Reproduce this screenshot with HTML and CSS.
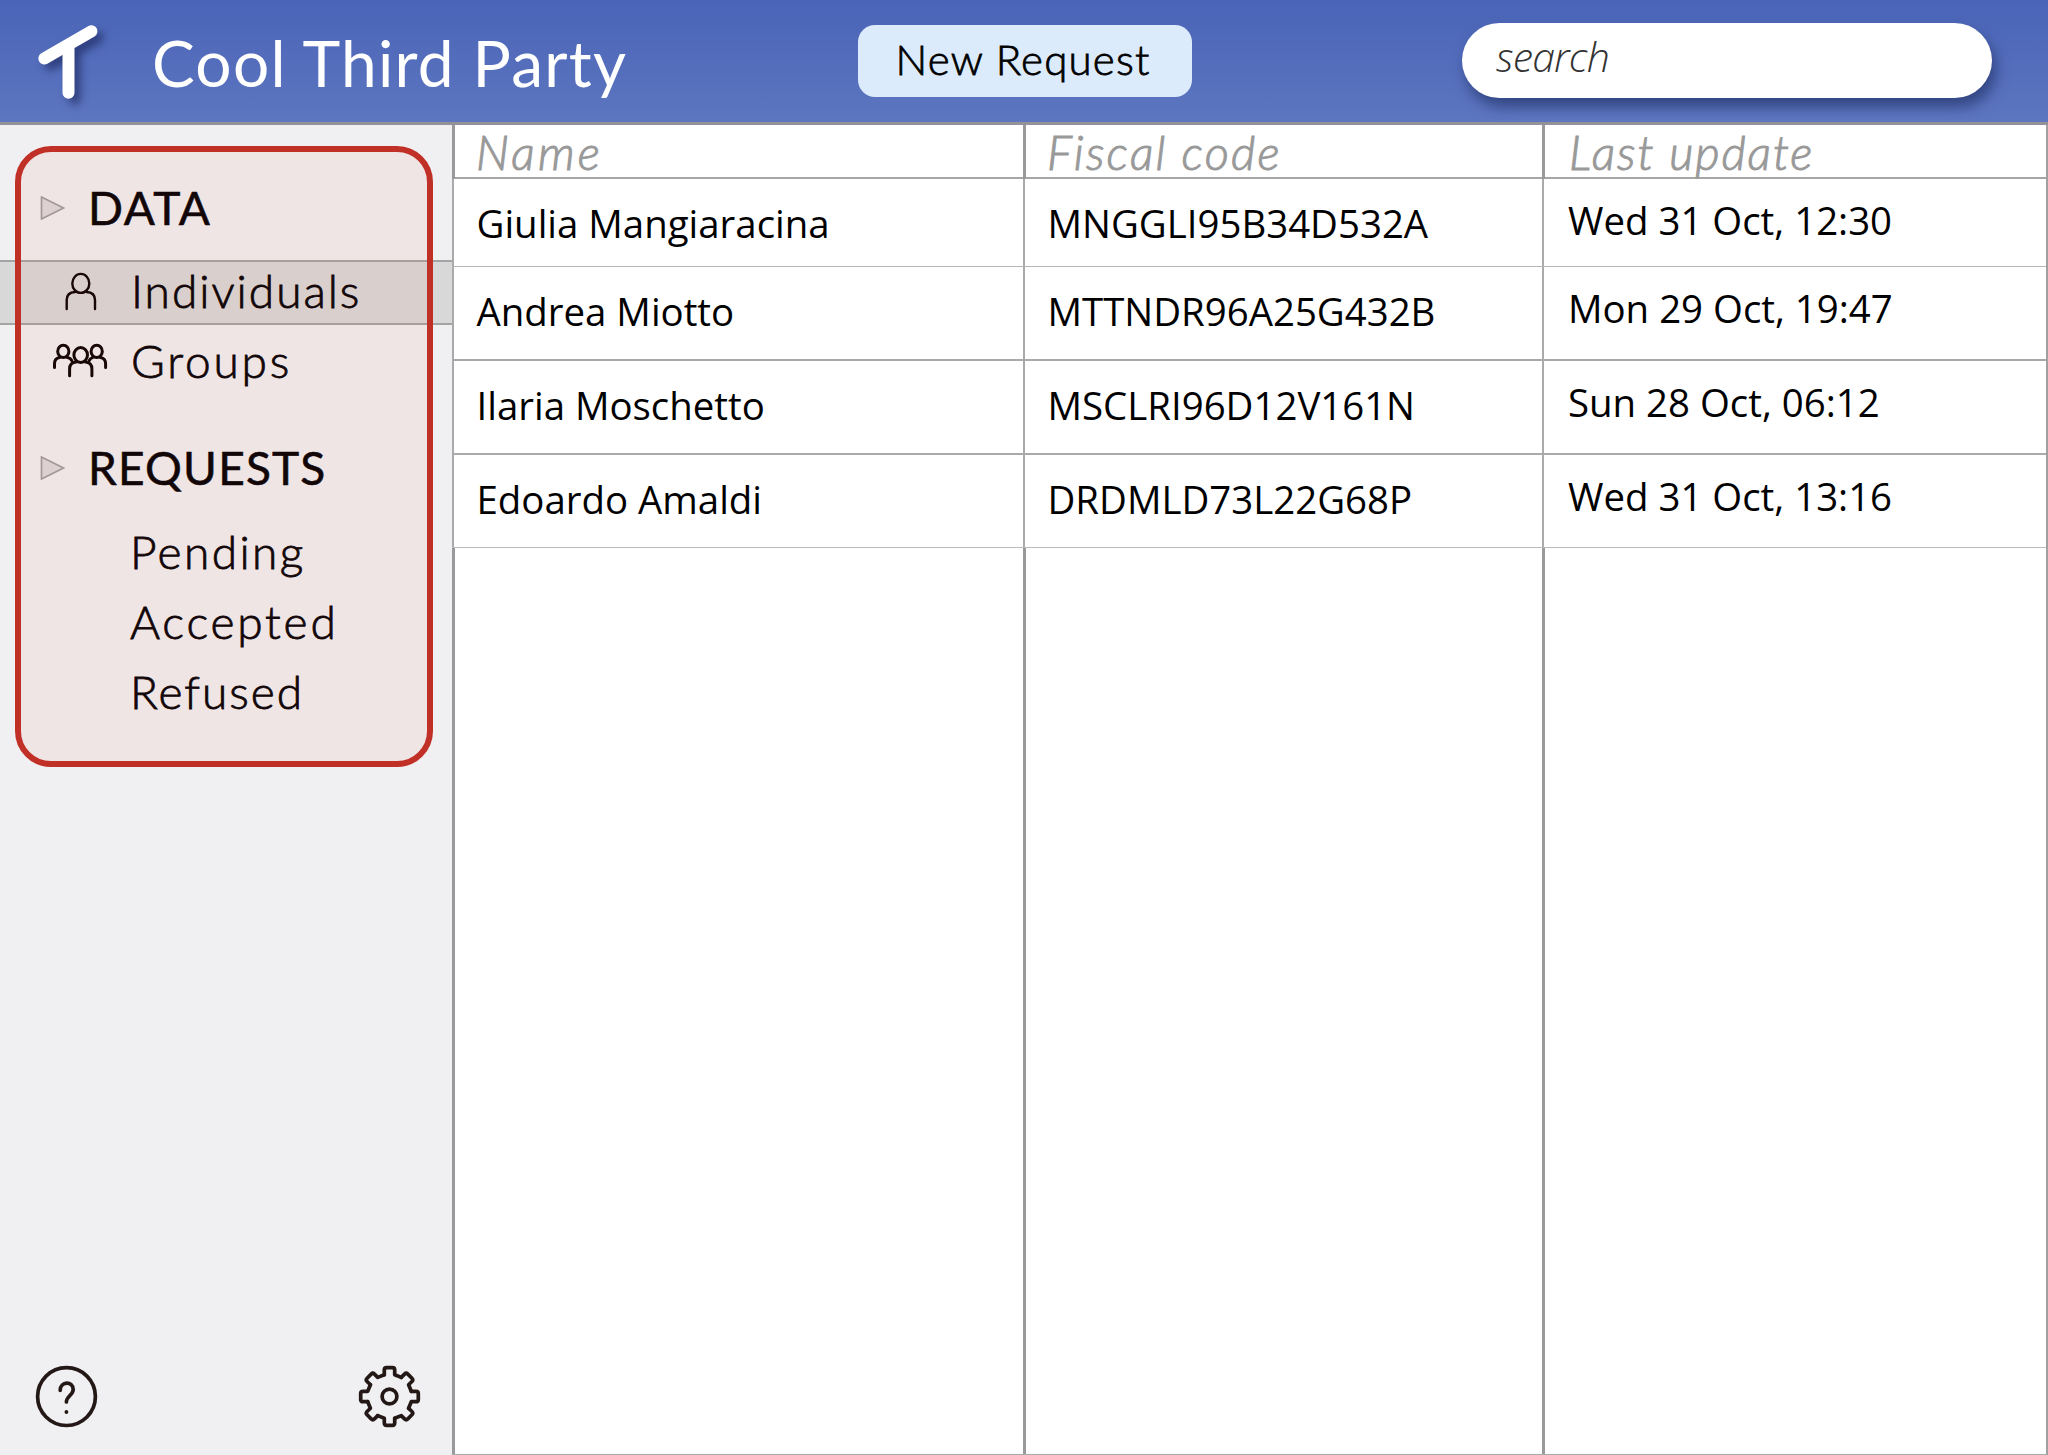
FILE: index.html
```html
<!DOCTYPE html>
<html lang="en">
<head>
<meta charset="utf-8">
<title>Cool Third Party</title>
<link rel="stylesheet" href="styles.css">
</head>
<body>
<header class="topbar">
  <div class="brand">
    <svg class="logo" viewBox="30 15 80 95" fill="none" stroke="#fff" stroke-width="12" stroke-linecap="round"><path d="M44.3 58.5 91.5 31.2M68.5 46V92.8"/></svg>
    <h1 class="title">Cool Third Party</h1>
  </div>
  <button class="new-request">New Request</button>
  <div class="search">search</div>
</header>
<main class="workspace">
  <aside class="sidebar">
    <nav class="menu">
      <div class="heading data"><svg class="arrow" viewBox="0 0 24 24"><path d="M1 1V23L23 12Z"/></svg><span>DATA</span></div>
      <a class="item selected"><svg class="icon" viewBox="50 260 60 60" stroke-width="2.4"><ellipse cx="80.8" cy="282.4" rx="8.5" ry="9.5"/><path d="M66.7 308V299Q66.7 291.5 75 291M95 308V299Q95 291.5 86.7 291"/></svg><span>Individuals</span></a>
      <a class="item groups"><svg class="icon" viewBox="50 329 60 60" stroke-width="3"><ellipse cx="63.3" cy="350.4" rx="5.6" ry="6.2"/><ellipse cx="96.7" cy="350.4" rx="5.6" ry="6.2"/><ellipse cx="80.7" cy="354" rx="6.8" ry="7.4"/><path d="M54.5 366.5V363Q54.5 357.5 59.5 356.6M67.5 356.6Q70.5 357 71.8 359.5M105.6 366.5V363Q105.6 357.5 100.5 356.6M92.5 356.6Q90.5 357 89.2 359.5M69.6 374.8V368Q69.6 361.5 76 361M91.9 374.8V368Q91.9 361.5 85.5 361"/></svg><span>Groups</span></a>
      <div class="heading requests"><svg class="arrow" viewBox="0 0 24 24"><path d="M1 1V23L23 12Z"/></svg><span>REQUESTS</span></div>
      <a class="item sub pending">Pending</a>
      <a class="item sub accepted">Accepted</a>
      <a class="item sub refused">Refused</a>
    </nav>
    <div class="highlight"></div>
    <div class="tools">
      <svg class="tool" viewBox="34 1364 65 65"><circle cx="66.5" cy="1396.6" r="28.9"/><path d="M60.2 1390.3C60.2 1380.8 73.2 1380.8 73.2 1389.5C73.2 1395 66.4 1396 66.4 1402"/><circle class="dot" cx="66.4" cy="1412" r="1.9"/></svg>
      <svg class="tool" viewBox="-32.5 -32.5 65 65"><defs><path id="tooth" d="M-5.2 -21.8V-26.5Q-5.2 -28.8 -2.9 -28.8H2.9Q5.2 -28.8 5.2 -26.5V-21.8L11.74 -19.09"/></defs><use href="#tooth"/><use href="#tooth" transform="rotate(45)"/><use href="#tooth" transform="rotate(90)"/><use href="#tooth" transform="rotate(135)"/><use href="#tooth" transform="rotate(180)"/><use href="#tooth" transform="rotate(225)"/><use href="#tooth" transform="rotate(270)"/><use href="#tooth" transform="rotate(315)"/><circle r="7.4"/></svg>
    </div>
  </aside>
  <section class="table">
    <div class="row head"><div class="cell name">Name</div><div class="cell code">Fiscal code</div><div class="cell update">Last update</div></div>
    <div class="row r1"><div class="cell">Giulia Mangiaracina</div><div class="cell">MNGGLI95B34D532A</div><div class="cell date">Wed 31 Oct, 12:30</div></div>
    <div class="row r2"><div class="cell">Andrea Miotto</div><div class="cell">MTTNDR96A25G432B</div><div class="cell date">Mon 29 Oct, 19:47</div></div>
    <div class="row r3"><div class="cell">Ilaria Moschetto</div><div class="cell">MSCLRI96D12V161N</div><div class="cell date">Sun 28 Oct, 06:12</div></div>
    <div class="row r4"><div class="cell">Edoardo Amaldi</div><div class="cell">DRDMLD73L22G68P</div><div class="cell date">Wed 31 Oct, 13:16</div></div>
    <div class="row filler"><div class="cell"></div><div class="cell"></div><div class="cell"></div></div>
  </section>
</main>
</body>
</html>
```
FILE: styles.css
```css
* { box-sizing: border-box; }
body { margin: 0; width: 2048px; height: 1455px; display: flex; flex-direction: column; overflow: hidden; background: #fff; font-family: Lato, sans-serif; color: #000; }

.topbar { flex: none; height: 125px; display: flex; align-items: flex-start; background: linear-gradient(#4a64b7, #5d76c0 122px); border-bottom: 3px solid #929297; }
.brand { width: 858px; display: flex; padding: 15px 0 0 30px; }
.logo { width: 80px; height: 95px; overflow: visible; filter: drop-shadow(6px 6px 4px rgba(20, 30, 80, .6)); }
.title { margin: 0 0 0 42px; font-weight: 400; font-size: 64px; line-height: 95px; letter-spacing: 1.25px; color: #fff; white-space: nowrap; }
.new-request { width: 334px; height: 72px; margin-top: 25px; padding: 0 4px 4px 0; border: 0; border-radius: 17px; background: #dcebfc; color: #000; font: 300 42px/68px Lato, sans-serif; letter-spacing: 1.2px; -webkit-text-stroke: .8px #000; }
.search { width: 530px; height: 75px; margin: 23px 0 0 270px; padding-left: 34px; border-radius: 38px; background: #fff; box-shadow: 4px 9px 14px rgba(25, 40, 90, .6); color: #333; font: italic 300 41px/66px "Open Sans", sans-serif; letter-spacing: -.8px; }

.workspace { flex: 1; display: grid; grid-template-columns: 452px 1fr; min-height: 0; }
.sidebar { position: relative; display: flex; flex-direction: column; background: #f0f0f3; }
.menu { display: flex; flex-direction: column; padding-top: 53px; font-size: 46px; line-height: 60px; color: #050308; }
.heading { display: flex; align-items: center; height: 60px; padding-left: 40px; }
.heading span { margin-left: 23px; -webkit-text-stroke: .6px currentColor; letter-spacing: 1.2px; }
.data span { letter-spacing: 1.6px; }
.arrow { width: 25px; height: 24px; fill: #dbd9dc; stroke: #a19ea1; stroke-width: 1.7; }
.item { display: flex; align-items: center; height: 60px; padding-left: 50px; font-weight: 300; letter-spacing: 2px; -webkit-text-stroke: .8px currentColor; }
.icon { width: 60px; height: 60px; margin-right: 21px; fill: none; stroke: #0c0505; stroke-linecap: round; }
.selected { height: 65px; margin-top: 22px; padding-bottom: 3px; background: #d8d8d8; border: solid #a4a4a4; border-width: 2px 0; }
.groups { margin-top: 5px; letter-spacing: 2.8px; }
.groups span { padding-top: 2px; }
.requests { margin-top: 48px; }
.sub { height: 70px; padding-left: 130px; }
.pending { margin-top: 19px; letter-spacing: 2.4px; }
.accepted { letter-spacing: 2.8px; }
.highlight { position: absolute; left: 15px; top: 21px; width: 418px; height: 621px; border: 6px solid #c13026; border-radius: 36px; background: rgba(240, 73, 20, .06); background-clip: padding-box; }
.tools { margin-top: auto; display: flex; justify-content: space-between; padding: 0 30px 26px 34px; }
.tool { width: 65px; height: 65px; fill: none; stroke: #231815; stroke-width: 3.7; stroke-linecap: round; stroke-linejoin: round; }
.tool .dot { fill: #231815; stroke: none; }

.table { display: flex; flex-direction: column; border-right: 2px solid #a0a0a0; border-bottom: 1px solid #aaa; }
.row { display: grid; grid-template-columns: 571px 519px 1fr; font: 400 38.4px/60px "Open Sans", sans-serif; }
.cell { border-left: 2px solid #aaa; padding: 14px 0 0 22.5px; white-space: nowrap; }
.head .cell, .filler .cell { border-left: 3px solid #999; }
.head { height: 54px; border-bottom: 2px solid #a6a6a6; font: italic 300 47px/54px Lato, sans-serif; color: #999; -webkit-text-stroke: 1px #999; }
.head .cell { padding: 0 0 0 21px; letter-spacing: 2.2px; }
.head .name { letter-spacing: 3.2px; }
.head .update { padding-left: 24px; letter-spacing: 1.9px; }
.date { padding: 11px 0 0 24px; }
.r1 { height: 88px; border-bottom: 1px solid #b4b4b4; }
.r2 { height: 94px; border-bottom: 2px solid #aaa; }
.r3 { height: 94px; border-bottom: 2px solid #aaa; }
.r4 { height: 93px; border-bottom: 1px solid #bbb; }
.filler { flex: 1; }
```
